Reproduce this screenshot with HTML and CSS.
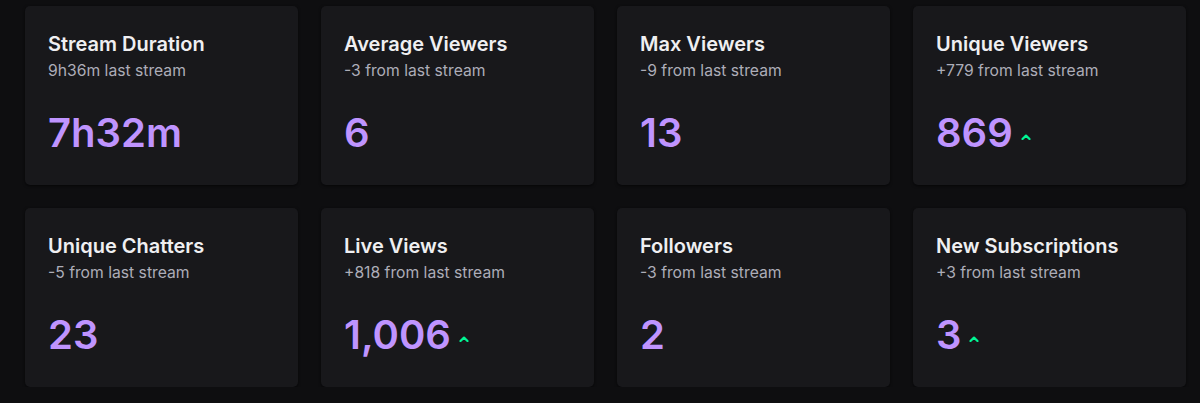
FILE: index.html
```html
<!DOCTYPE html>
<html lang="en">
<head>
<meta charset="utf-8">
<title>Stream Stats</title>
<link rel="stylesheet" href="styles.css">
</head>
<body>
<main class="grid">
  <section class="card">
    <h3 class="title">Stream Duration</h3>
    <p class="sub">9h36m last stream</p>
    <div class="value">7h32m</div>
  </section>
  <section class="card">
    <h3 class="title">Average Viewers</h3>
    <p class="sub">-3 from last stream</p>
    <div class="value">6</div>
  </section>
  <section class="card">
    <h3 class="title">Max Viewers</h3>
    <p class="sub">-9 from last stream</p>
    <div class="value">13</div>
  </section>
  <section class="card">
    <h3 class="title">Unique Viewers</h3>
    <p class="sub">+779 from last stream</p>
    <div class="value">869<svg class="up" viewBox="0 0 10 6" width="10" height="6"><polyline points="1.5,5 5,1.6 8.5,5" /></svg></div>
  </section>
  <section class="card">
    <h3 class="title">Unique Chatters</h3>
    <p class="sub">-5 from last stream</p>
    <div class="value">23</div>
  </section>
  <section class="card">
    <h3 class="title">Live Views</h3>
    <p class="sub">+818 from last stream</p>
    <div class="value">1,006<svg class="up" viewBox="0 0 10 6" width="10" height="6"><polyline points="1.5,5 5,1.6 8.5,5" /></svg></div>
  </section>
  <section class="card">
    <h3 class="title">Followers</h3>
    <p class="sub">-3 from last stream</p>
    <div class="value">2</div>
  </section>
  <section class="card">
    <h3 class="title">New Subscriptions</h3>
    <p class="sub">+3 from last stream</p>
    <div class="value">3<svg class="up" viewBox="0 0 10 6" width="10" height="6"><polyline points="1.5,5 5,1.6 8.5,5" /></svg></div>
  </section>
</main>
</body>
</html>
```
FILE: styles.css
```css
html, body {
  margin: 0;
  background: #0e0e10;
}
body {
  font-family: Inter, "Noto Sans", sans-serif;
  padding: 6px 0 0 25px;
}
.grid {
  display: grid;
  grid-template-columns: repeat(4, 272.5px);
  column-gap: 23.5px;
  row-gap: 23px;
}
.card {
  background: #18181b;
  border-radius: 5px;
  box-shadow: 0 1px 3px rgba(0,0,0,0.6);
  padding: 26px 23px 28px;
  height: 179px;
  box-sizing: border-box;
}
.title {
  margin: 0;
  color: #efeff1;
  font-size: 20px;
  line-height: 24px;
  font-weight: 600;
}
.sub {
  margin: 5px 0 0;
  color: #adadb8;
  font-size: 15.7px;
  line-height: 20px;
  font-weight: 400;
}
.value {
  margin-top: 28px;
  color: #bf94ff;
  font-size: 40px;
  line-height: 48px;
  font-weight: 600;
  display: flex;
  align-items: center;
}
.up {
  margin-left: 8px;
  margin-top: 7px;
  fill: none;
  stroke: #00f593;
  stroke-width: 2.2;
  stroke-linecap: round;
  stroke-linejoin: round;
}
```
